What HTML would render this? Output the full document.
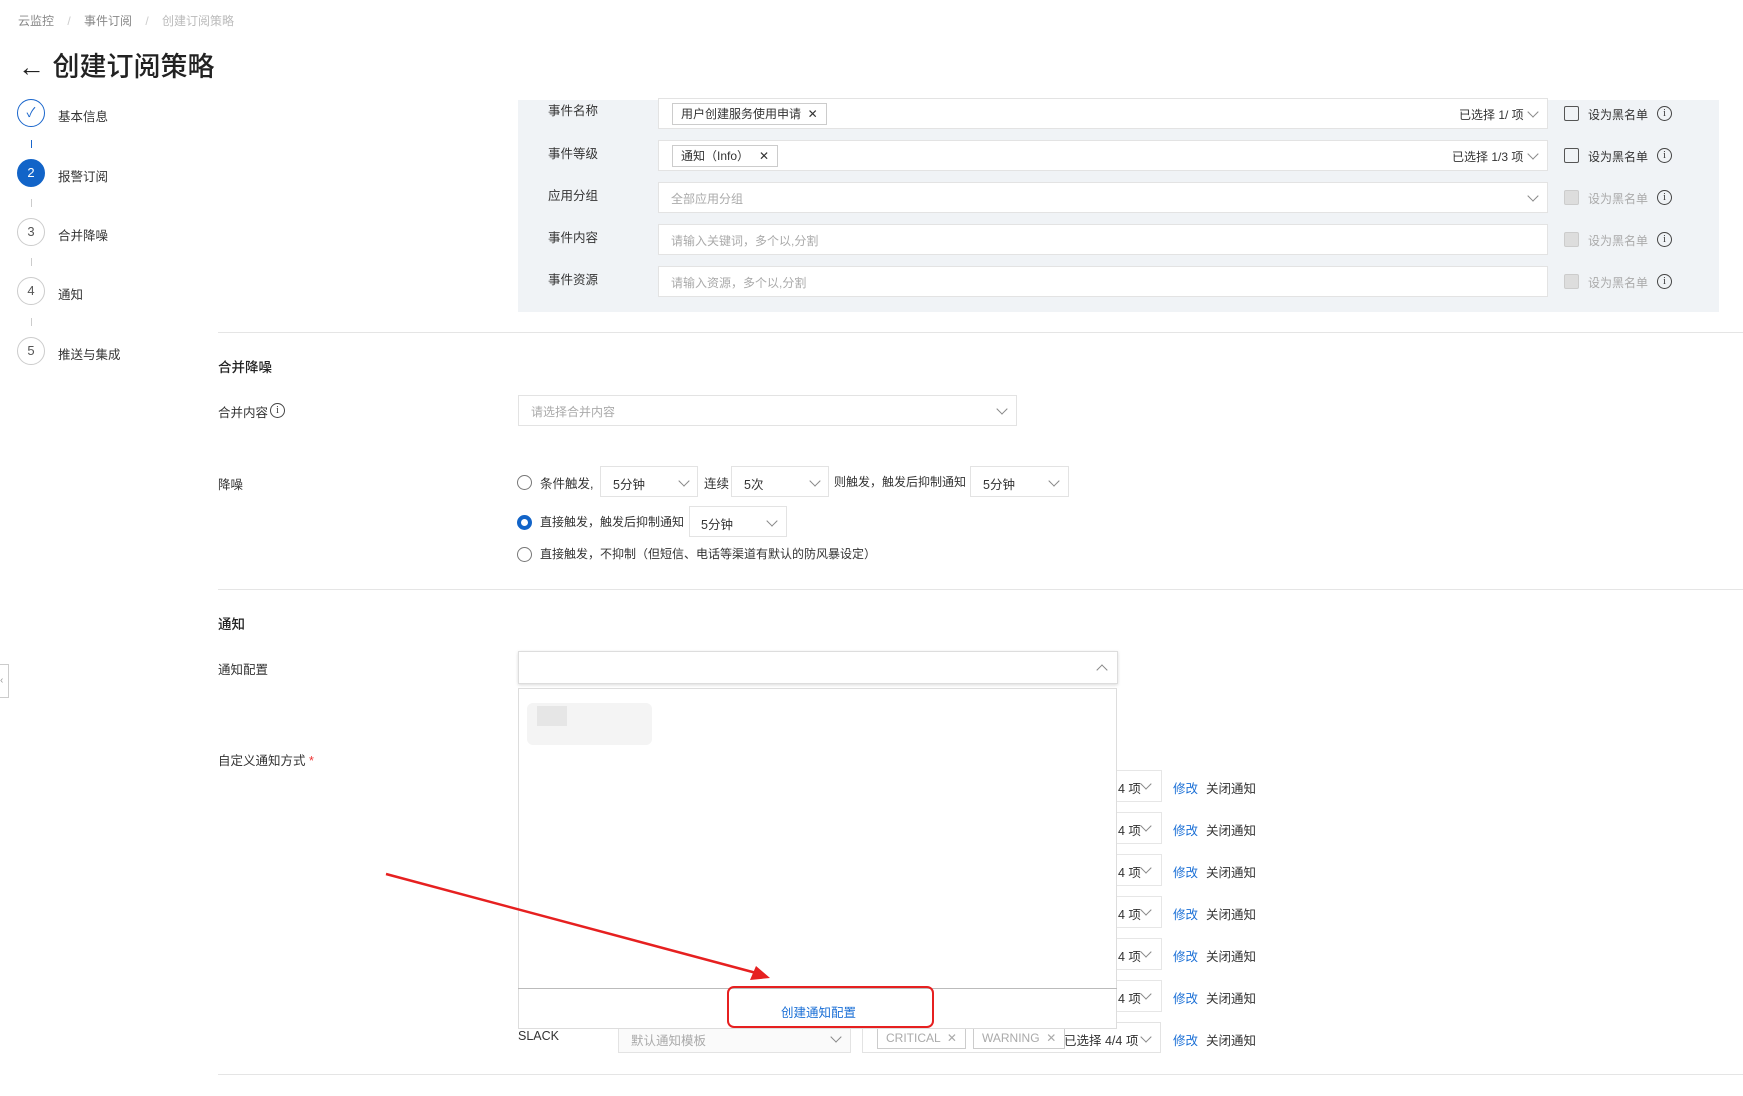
<!DOCTYPE html>
<html><head><meta charset="utf-8"><style>
*{box-sizing:border-box;margin:0;padding:0}
body{width:1743px;height:1096px;position:relative;background:#fff;font-family:"Liberation Sans","Noto Sans CJK SC",sans-serif;font-size:12.5px;color:#333;overflow:hidden}
.a{position:absolute;white-space:nowrap}
.c{position:absolute;width:28px;height:28px;border-radius:50%;border:1px solid #ccc;text-align:center;line-height:26px;font-size:13px;color:#555}
.inp{position:absolute;background:#fff;border:1px solid #e3e3e3;height:31px}
.ph{color:#aaa}
.chev{position:absolute;width:8px;height:8px;border-right:1.3px solid #888;border-bottom:1.3px solid #888;transform:rotate(45deg)}
.cb{position:absolute;width:15px;height:15px;border:1.3px solid #555;border-radius:2px}
.cbd{border-color:#ccc;background:#ddd}
.info{position:absolute;width:15px;height:15px;border:1.2px solid #444;border-radius:50%;font-size:10px;text-align:center;line-height:13px;font-family:"Liberation Serif",serif}
.tag{position:absolute;border:1px solid #ccc;height:22px;line-height:20px;padding:0 8px;font-size:12px}
.radio{position:absolute;width:15px;height:15px;border:1.3px solid #777;border-radius:50%}
.hr{position:absolute;height:1px;background:#e5e5e5}
.lnk{color:#1a6fd6}
</style></head><body>
<div class="a" style="left:18px;top:12px;color:#888;font-size:12px">云监控 <span style="color:#ccc;margin:0 10px">/</span> 事件订阅 <span style="color:#ccc;margin:0 10px">/</span> <span style="color:#bbb">创建订阅策略</span></div>
<div class="a" style="left:18px;top:45px;font-size:27px;color:#222;font-weight:500">← 创建订阅策略</div>

<div class="c" style="left:17px;top:99px;border-color:#1a66cc;color:#1a66cc">✓</div>
<div class="a" style="left:58px;top:106px">基本信息</div>
<div class="a" style="left:31px;top:140px;width:1px;height:8px;background:#1a66cc"></div>
<div class="c" style="left:17px;top:159px;background:#1264c8;border-color:#1264c8;color:#fff">2</div>
<div class="a" style="left:58px;top:166px">报警订阅</div>
<div class="a" style="left:31px;top:199px;width:1px;height:8px;background:#ccc"></div>
<div class="c" style="left:17px;top:218px">3</div>
<div class="a" style="left:58px;top:225px">合并降噪</div>
<div class="a" style="left:31px;top:258px;width:1px;height:8px;background:#ccc"></div>
<div class="c" style="left:17px;top:277px">4</div>
<div class="a" style="left:58px;top:284px">通知</div>
<div class="a" style="left:31px;top:318px;width:1px;height:8px;background:#ccc"></div>
<div class="c" style="left:17px;top:337px">5</div>
<div class="a" style="left:58px;top:344px">推送与集成</div>
<div class="a" style="left:0;top:664px;width:9px;height:34px;border:1px solid #ccc;border-left:none;background:#fff;font-size:10px;color:#999;line-height:32px">‹</div>

<div class="a" style="left:518px;top:100px;width:1201px;height:212px;background:#f0f3f6"></div>
<div class="a" style="left:548px;top:100px">事件名称</div>
<div class="a" style="left:548px;top:143px">事件等级</div>
<div class="a" style="left:548px;top:185px">应用分组</div>
<div class="a" style="left:548px;top:227px">事件内容</div>
<div class="a" style="left:548px;top:269px">事件资源</div>

<div class="inp" style="left:658px;top:98px;width:890px"></div>
<div class="tag" style="left:672px;top:103px">用户创建服务使用申请 &nbsp;✕</div>
<div class="a" style="left:1459px;top:106px;font-size:12px">已选择 1/ 项</div><div class="chev" style="left:1529px;top:108px"></div>
<div class="inp" style="left:658px;top:140px;width:890px"></div>
<div class="tag" style="left:672px;top:145px">通知（Info） &nbsp;&nbsp;✕</div>
<div class="a" style="left:1452px;top:148px;font-size:12px">已选择 1/3 项</div><div class="chev" style="left:1529px;top:150px"></div>
<div class="inp" style="left:658px;top:182px;width:890px"></div>
<div class="a ph" style="left:671px;top:190px;font-size:12px">全部应用分组</div><div class="chev" style="left:1529px;top:192px"></div>
<div class="inp" style="left:658px;top:224px;width:890px"></div>
<div class="a ph" style="left:671px;top:232px;font-size:12px">请输入关键词，多个以,分割</div>
<div class="inp" style="left:658px;top:266px;width:890px"></div>
<div class="a ph" style="left:671px;top:274px;font-size:12px">请输入资源，多个以,分割</div>

<div class="cb" style="left:1564px;top:106px"></div><div class="a" style="left:1588px;top:106px;font-size:12px">设为黑名单</div><div class="info" style="left:1657px;top:106px">i</div>
<div class="cb" style="left:1564px;top:148px"></div><div class="a" style="left:1588px;top:148px;font-size:12px">设为黑名单</div><div class="info" style="left:1657px;top:148px">i</div>
<div class="cb cbd" style="left:1564px;top:190px"></div><div class="a" style="left:1588px;top:190px;font-size:12px;color:#aaa">设为黑名单</div><div class="info" style="left:1657px;top:190px">i</div>
<div class="cb cbd" style="left:1564px;top:232px"></div><div class="a" style="left:1588px;top:232px;font-size:12px;color:#aaa">设为黑名单</div><div class="info" style="left:1657px;top:232px">i</div>
<div class="cb cbd" style="left:1564px;top:274px"></div><div class="a" style="left:1588px;top:274px;font-size:12px;color:#aaa">设为黑名单</div><div class="info" style="left:1657px;top:274px">i</div>

<div class="hr" style="left:218px;top:332px;width:1525px"></div>
<div class="a" style="left:218px;top:356px;font-size:13.5px;font-weight:500;color:#222">合并降噪</div>
<div class="a" style="left:218px;top:402px">合并内容</div><div class="info" style="left:270px;top:403px">i</div>
<div class="inp" style="left:518px;top:395px;width:499px"></div>
<div class="a ph" style="left:531px;top:403px;font-size:12px">请选择合并内容</div><div class="chev" style="left:998px;top:405px"></div>

<div class="a" style="left:218px;top:474px">降噪</div>
<div class="radio" style="left:517px;top:475px"></div>
<div class="a" style="left:540px;top:473px">条件触发,</div>
<div class="inp" style="left:600px;top:466px;width:98px"></div><div class="a" style="left:613px;top:474px">5分钟</div><div class="chev" style="left:680px;top:477px"></div>
<div class="a" style="left:704px;top:473px">连续</div>
<div class="inp" style="left:731px;top:466px;width:98px"></div><div class="a" style="left:744px;top:474px">5次</div><div class="chev" style="left:811px;top:477px"></div>
<div class="a" style="left:834px;top:473px;font-size:12px">则触发，触发后抑制通知</div>
<div class="inp" style="left:970px;top:466px;width:99px"></div><div class="a" style="left:983px;top:474px">5分钟</div><div class="chev" style="left:1050px;top:477px"></div>
<div class="radio" style="left:517px;top:515px;border:4.5px solid #1264c8"></div>
<div class="a" style="left:540px;top:513px;font-size:12px">直接触发，触发后抑制通知</div>
<div class="inp" style="left:689px;top:506px;width:98px"></div><div class="a" style="left:701px;top:514px">5分钟</div><div class="chev" style="left:768px;top:517px"></div>
<div class="radio" style="left:517px;top:547px"></div>
<div class="a" style="left:540px;top:545px;font-size:12px">直接触发，不抑制（但短信、电话等渠道有默认的防风暴设定）</div>

<div class="hr" style="left:218px;top:589px;width:1525px"></div>
<div class="a" style="left:218px;top:613px;font-size:13.5px;font-weight:500;color:#222">通知</div>
<div class="a" style="left:218px;top:659px">通知配置</div>
<div class="a" style="left:518px;top:651px;width:600px;height:33px;border:1px solid #ddd;box-shadow:0 1px 3px rgba(0,0,0,.15)"></div>
<div class="chev" style="left:1098px;top:666px;transform:rotate(225deg)"></div>
<div class="a" style="left:218px;top:750px">自定义通知方式 <span style="color:#e33">*</span></div>

<div class="a" style="left:1118px;top:778px">4 项</div><div class="chev" style="left:1142px;top:780px"></div><div class="a lnk" style="left:1173px;top:778px">修改</div><div class="a" style="left:1206px;top:778px">关闭通知</div>
<div class="a" style="left:1118px;top:820px">4 项</div><div class="chev" style="left:1142px;top:822px"></div><div class="a lnk" style="left:1173px;top:820px">修改</div><div class="a" style="left:1206px;top:820px">关闭通知</div>
<div class="a" style="left:1118px;top:862px">4 项</div><div class="chev" style="left:1142px;top:864px"></div><div class="a lnk" style="left:1173px;top:862px">修改</div><div class="a" style="left:1206px;top:862px">关闭通知</div>
<div class="a" style="left:1118px;top:904px">4 项</div><div class="chev" style="left:1142px;top:906px"></div><div class="a lnk" style="left:1173px;top:904px">修改</div><div class="a" style="left:1206px;top:904px">关闭通知</div>
<div class="a" style="left:1118px;top:946px">4 项</div><div class="chev" style="left:1142px;top:948px"></div><div class="a lnk" style="left:1173px;top:946px">修改</div><div class="a" style="left:1206px;top:946px">关闭通知</div>
<div class="a" style="left:1118px;top:988px">4 项</div><div class="chev" style="left:1142px;top:990px"></div><div class="a lnk" style="left:1173px;top:988px">修改</div><div class="a" style="left:1206px;top:988px">关闭通知</div>
<div class="a" style="left:1116px;top:770px;width:46px;height:32px;border:1px solid #e6e6e6;border-left:none"></div>
<div class="a" style="left:1116px;top:812px;width:46px;height:32px;border:1px solid #e6e6e6;border-left:none"></div>
<div class="a" style="left:1116px;top:854px;width:46px;height:32px;border:1px solid #e6e6e6;border-left:none"></div>
<div class="a" style="left:1116px;top:896px;width:46px;height:32px;border:1px solid #e6e6e6;border-left:none"></div>
<div class="a" style="left:1116px;top:938px;width:46px;height:32px;border:1px solid #e6e6e6;border-left:none"></div>
<div class="a" style="left:1116px;top:980px;width:46px;height:32px;border:1px solid #e6e6e6;border-left:none"></div>

<div class="a" style="left:518px;top:1029px">SLACK</div>
<div class="inp" style="left:618px;top:1022px;width:233px;background:#fafafa"></div><div class="a ph" style="left:631px;top:1030px">默认通知模板</div><div class="chev" style="left:832px;top:1033px"></div>
<div class="inp" style="left:862px;top:1022px;width:299px"></div>
<div class="tag" style="left:877px;top:1027px;color:#aaa">CRITICAL &nbsp;✕</div>
<div class="tag" style="left:973px;top:1027px;color:#aaa">WARNING &nbsp;✕</div>
<div class="a" style="left:1064px;top:1030px">已选择 4/4 项</div><div class="chev" style="left:1142px;top:1033px"></div>
<div class="a lnk" style="left:1173px;top:1030px">修改</div><div class="a" style="left:1206px;top:1030px">关闭通知</div>

<div class="a" style="left:518px;top:688px;width:599px;height:341px;background:#fff;border:1px solid #ddd"></div>
<div class="a" style="left:527px;top:703px;width:125px;height:42px;background:#f4f4f4;border-radius:6px"></div>
<div class="a" style="left:537px;top:706px;width:30px;height:20px;background:#e6e6e6"></div>
<div class="a" style="left:518px;top:988px;width:599px;height:1px;background:#bbb"></div>
<div class="a" style="left:727px;top:986px;width:207px;height:42px;border:2.5px solid #e62020;border-radius:7px"></div>
<div class="a lnk" style="left:781px;top:1002px">创建通知配置</div>
<svg class="a" style="left:0;top:0" width="1743" height="1096"><line x1="386" y1="874" x2="760" y2="974" stroke="#e62020" stroke-width="2.5"/><polygon points="770,978 750,980 756,966" fill="#e62020"/></svg>

<div class="hr" style="left:218px;top:1074px;width:1525px"></div>
</body></html>
